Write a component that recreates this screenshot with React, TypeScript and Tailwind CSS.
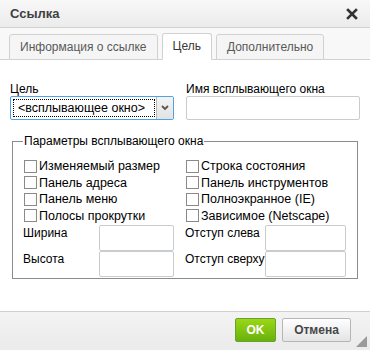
import React from "react";

const F = { fontFamily: '"Liberation Sans", Arial, sans-serif' };

function Check({ label }: { label: string }) {
  return (
    <div className="flex items-center h-[16.5px]">
      <span className="w-[13px] h-[13px] border border-[#8a8a8a] bg-white mr-[2px] shrink-0" />
      <span className="text-[12.5px] leading-[14px] text-black whitespace-nowrap">{label}</span>
    </div>
  );
}

function Field({ label, labelW, inputW }: { label: string; labelW: string; inputW: string }) {
  return (
    <div className="flex items-start h-[26px]">
      <span className={`text-[12px] leading-[14px] text-black pt-[1px] whitespace-nowrap shrink-0 ${labelW}`}>{label}</span>
      <span className={`h-[26px] border border-[#c9cccf] rounded-[2px] bg-white shrink-0 ${inputW}`} />
    </div>
  );
}

export default function App() {
  return (
    <div style={F} className="w-[370px] h-[350px] bg-white flex flex-col overflow-hidden relative">
      {/* title */}
      <div className="h-[28px] shrink-0 flex items-center justify-between px-[10px] bg-gradient-to-b from-[#f8f8f8] to-[#ebebeb] border-b border-[#d1d1d1]">
        <span className="text-[13px] font-bold text-[#3f3f3f]">Ссылка</span>
        <svg width="12" height="12" viewBox="0 0 12 12" className="mr-[2px]">
          <path d="M2 2 L10 10 M10 2 L2 10" stroke="#333" strokeWidth="2.6" strokeLinecap="square" />
        </svg>
      </div>
      {/* tabs */}
      <div className="h-[32px] shrink-0 bg-[#f8f8f8] border-b border-[#d1d1d1] flex items-end pl-[9px] gap-[4px]">
        <div className="h-[26px] -mb-[1px] px-[10px] flex items-center border border-[#d1d1d1] rounded-t-[3px] bg-[#f5f5f5] text-[12px] text-[#595959]">
          Информация о ссылке
        </div>
        <div className="h-[27px] -mb-[1px] px-[10px] flex items-center border border-[#d1d1d1] border-b-white rounded-t-[3px] bg-white text-[12px] text-[#383838] pb-[1px]">
          Цель
        </div>
        <div className="h-[26px] -mb-[1px] px-[10px] flex items-center border border-[#d1d1d1] rounded-t-[3px] bg-[#f5f5f5] text-[12px] text-[#595959]">
          Дополнительно
        </div>
      </div>
      {/* content */}
      <div className="flex-1 px-[10px] pt-[22px]">
        <div className="flex gap-[12px]">
          <div className="w-[164px]">
            <div className="text-[12px] leading-[14px] text-black">Цель</div>
            <div className="h-[24px] border border-[#51a0e8] rounded-[2px] flex items-stretch bg-white">
              <div className="flex-1 m-[2px] mr-[1px] border border-dotted border-black flex items-center pl-[4px] text-[12.5px] text-black leading-none">
                &lt;всплывающее окно&gt;
              </div>
              <div className="w-[17px] border-l border-[#b9b9b9] bg-gradient-to-b from-[#f4f4f4] to-[#e2e2e2] flex items-center justify-center">
                <svg width="8" height="6" viewBox="0 0 8 6">
                  <path d="M1 1 L4 4 L7 1" stroke="#555" strokeWidth="1.8" fill="none" />
                </svg>
              </div>
            </div>
          </div>
          <div className="w-[174px]">
            <div className="text-[12px] leading-[14px] text-black">Имя всплывающего окна</div>
            <div className="h-[24px] border border-[#c9cccf] rounded-[2px] bg-white" />
          </div>
        </div>

        <fieldset className="mt-[14px] ml-[2px] w-[345px] h-[145px] border border-[#8c8c8c] px-[11px] pt-[10px]">
          <legend className="text-[12px] leading-[14px] text-black px-[1px] -ml-[1px]">
            Параметры всплывающего окна
          </legend>
          <div className="grid grid-cols-[162px_1fr]">
            <Check label="Изменяемый размер" />
            <Check label="Строка состояния" />
            <Check label="Панель адреса" />
            <Check label="Панель инструментов" />
            <Check label="Панель меню" />
            <Check label="Полноэкранное (IE)" />
            <Check label="Полосы прокрутки" />
            <Check label="Зависимое (Netscape)" />
          </div>
          <div className="grid grid-cols-[162px_1fr] -ml-[1px] mt-[1px]">
            <Field label="Ширина" labelW="w-[76px]" inputW="w-[75px]" />
            <Field label="Отступ слева" labelW="w-[80px]" inputW="w-[81px]" />
            <Field label="Высота" labelW="w-[76px]" inputW="w-[75px]" />
            <Field label="Отступ сверху" labelW="w-[80px]" inputW="w-[81px]" />
          </div>
        </fieldset>
      </div>
      {/* footer */}
      <div className="h-[39px] shrink-0 border-t border-[#d1d1d1] bg-gradient-to-b from-[#f3f3f3] to-[#ebebeb] flex items-start justify-end pt-[6px] pr-[19px] gap-[6px]">
        <div className="h-[24px] w-[41px] rounded-[2px] border border-[#6aa02c] bg-gradient-to-b from-[#9ad717] to-[#69b10b] flex items-center justify-center text-[12px] font-bold text-white">
          OK
        </div>
        <div className="h-[24px] w-[69px] rounded-[2px] border border-[#b6b6b6] bg-gradient-to-b from-white to-[#e4e4e4] flex items-center justify-center text-[12px] font-bold text-[#474747]">
          Отмена
        </div>
      </div>
      <svg width="11" height="11" viewBox="0 0 11 11" className="absolute right-[3px] bottom-[3px]">
        <path d="M11 0 L11 11 L0 11 Z" fill="#9a9a9a" />
      </svg>
    </div>
  );
}
